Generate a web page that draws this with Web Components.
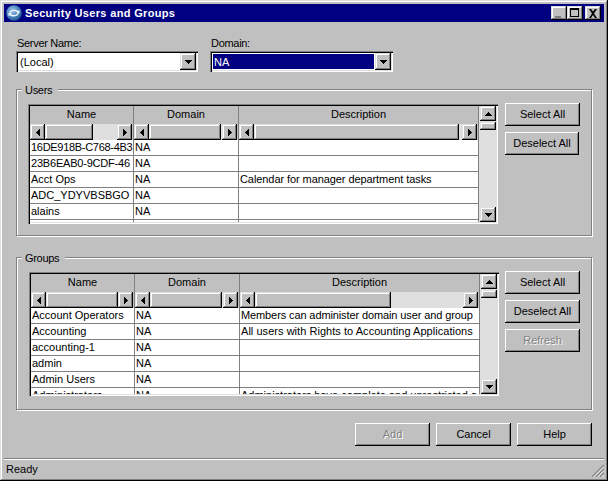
<!DOCTYPE html>
<html><head><meta charset="utf-8"><title>Security Users and Groups</title>
<style>
html,body{margin:0;padding:0;background:#c0c0c0;overflow:hidden}
body{font:11px "Liberation Sans",Arial,sans-serif;color:#000}
</style></head><body>
<x-window heading="Security Users and Groups">
  <x-form-row>
    <x-combo label="Server Name:" value="(Local)" style="width:182px"></x-combo>
    <x-combo label="Domain:" value="NA" selected style="width:183px"></x-combo>
  </x-form-row>
  <x-group legend="Users" style="height:147px;margin-top:17px;--pad-left:11px;--gap:7px">
    <x-grid cols="104 105 240" thumbs="48 72 205" style="--rows-h:82px">
      <x-row><x-cell style="letter-spacing:-.3px">16DE918B-C768-4B3</x-cell><x-cell>NA</x-cell><x-cell></x-cell></x-row>
      <x-row><x-cell style="letter-spacing:-.2px">23B6EAB0-9CDF-46</x-cell><x-cell>NA</x-cell><x-cell></x-cell></x-row>
      <x-row><x-cell>Acct Ops</x-cell><x-cell>NA</x-cell><x-cell style="letter-spacing:-.08px">Calendar for manager department tasks</x-cell></x-row>
      <x-row><x-cell>ADC_YDYVBSBGO</x-cell><x-cell>NA</x-cell><x-cell></x-cell></x-row>
      <x-row><x-cell>alains</x-cell><x-cell>NA</x-cell><x-cell></x-cell></x-row>
      <x-row><x-cell></x-cell><x-cell></x-cell><x-cell></x-cell></x-row>
    </x-grid>
    <x-button slot="actions">Select All</x-button>
    <x-button slot="actions" style="width:74px">Deselect All</x-button>
  </x-group>
  <x-group legend="Groups" style="height:153px;margin-top:21px;--pad-left:12px;--gap:6px">
    <x-grid cols="104 105 240" thumbs="72 72 136" style="--rows-h:86px">
      <x-row><x-cell>Account Operators</x-cell><x-cell>NA</x-cell><x-cell style="letter-spacing:-.11px">Members can administer domain user and group</x-cell></x-row>
      <x-row><x-cell>Accounting</x-cell><x-cell>NA</x-cell><x-cell style="letter-spacing:.04px">All users with Rights to Accounting Applications</x-cell></x-row>
      <x-row><x-cell>accounting-1</x-cell><x-cell>NA</x-cell><x-cell></x-cell></x-row>
      <x-row><x-cell>admin</x-cell><x-cell>NA</x-cell><x-cell></x-cell></x-row>
      <x-row><x-cell>Admin Users</x-cell><x-cell>NA</x-cell><x-cell></x-cell></x-row>
      <x-row><x-cell>Administrators</x-cell><x-cell>NA</x-cell><x-cell>Administrators have complete and unrestricted a</x-cell></x-row>
    </x-grid>
    <x-button slot="actions">Select All</x-button>
    <x-button slot="actions">Deselect All</x-button>
    <x-button slot="actions" disabled>Refresh</x-button>
  </x-group>
  <x-footer>
    <x-button disabled>Add</x-button>
    <x-button>Cancel</x-button>
    <x-button>Help</x-button>
  </x-footer>
  <x-status slot="status">Ready</x-status>
</x-window>
<script>
const FONT = '"Liberation Sans",Arial,sans-serif';
function def(name, css, html, init){
  customElements.define(name, class extends HTMLElement{
    constructor(){super();this.attachShadow({mode:'open'});}
    connectedCallback(){
      const h = typeof html==='function'?html(this):html;
      this.shadowRoot.innerHTML = '<style>'+css+'</style>'+h;
      if(init) init(this,this.shadowRoot);
    }
  });
}
const RAISED='box-shadow:inset -1px -1px #000,inset 1px 1px #dfdfdf,inset -2px -2px #808080,inset 2px 2px #fff;';
def('x-arrow',`:host{display:inline-block;line-height:0}svg{display:block}`,
  el=>{
    const p={up:[7,4,'M3 0h1v1h1v1h1v1h1v1H0V3h1V2h1V1h1z'],down:[7,4,'M0 0h7v1H6v1H5v1H4v1H3V3H2V2H1V1H0z'],left:[4,7,'M3 0h1v7H3V6H2V5H1V4H0V3h1V2h1V1h1z'],right:[4,7,'M0 0h1v1h1v1h1v1h1v1H3v1H2v1H1v1H0z']}[el.getAttribute('dir')];
    return `<svg width="${p[0]}" height="${p[1]}" viewBox="0 0 ${p[0]} ${p[1]}" shape-rendering="crispEdges"><path d="${p[2]}" fill="#000"/></svg>`;
  });
def('x-sbtn',`:host{display:flex;align-items:center;justify-content:center;flex:none;background:#c0c0c0;box-sizing:border-box;${RAISED}width:var(--w,15px);height:var(--h,16px)}`,
  el=>`<x-arrow dir="${el.getAttribute('dir')}"></x-arrow>`);
def('x-window',`
  :host{display:flex;flex-direction:column;box-sizing:border-box;width:608px;height:481px;padding:4px;background:#c0c0c0;font:11px ${FONT};
    box-shadow:inset -1px -1px #000,inset 1px 1px #dfdfdf,inset -2px -2px #808080,inset 2px 2px #fff}
  .title{display:flex;align-items:center;height:18px;flex:none;background:#000080;color:#fff;font-weight:700;padding:0 3px 0 2px}
  .title span{margin-left:3px;letter-spacing:.34px;white-space:nowrap;flex:1}
  .ctl{display:flex;align-items:center}
  .tb{box-sizing:border-box;width:16px;height:14px;background:#c0c0c0;${RAISED}display:flex;align-items:center;justify-content:center}
  .tb svg{display:block}
  .body{flex:1;display:flex;flex-direction:column;padding:14px 12px 0;min-height:0}
  `,el=>`
  <div class="title">
    <svg width="16" height="16" viewBox="0 0 16 16"><defs><radialGradient id="g" cx=".4" cy=".35" r=".75"><stop offset="0" stop-color="#9fc4e8"/><stop offset=".6" stop-color="#3f7cb8"/><stop offset="1" stop-color="#174a80"/></radialGradient></defs><circle cx="8" cy="8" r="7.8" fill="url(#g)"/><path d="M3 7.500C4.500 4.500 9.500 3.800 12.500 6l1-1.200v3.400h-3.400l1.200-1.100C9.500 5.600 6 5.700 4.500 7.800zM13 8.700c-1.500 3-6.500 3.700-9.500 1.500l-1 1.200V8h3.400L4.700 9.100c1.800 1.500 5.300 1.400 6.800-.7z" fill="#eef5fb"/></svg>
    <span>${el.getAttribute('heading')}</span>
    <div class="ctl">
      <div class="tb"><svg width="10" height="10" viewBox="0 0 10 10"><rect x="1" y="8" width="6" height="2" fill="#808080"/></svg></div>
      <div class="tb"><svg width="10" height="10" viewBox="0 0 10 10"><path d="M0 0h9v9H0zM1 2v6h7V2z" fill="#000" fill-rule="evenodd"/></svg></div>
      <div class="tb" style="margin-left:2px"><svg width="10" height="9" viewBox="0 0 10 9"><path d="M1 0h2l2 2.500L7 0h2L6 4.500 9 9H7L5 6 3 9H1l3-4.500z" fill="#000"/></svg></div>
    </div>
  </div>
  <div class="body"><slot></slot></div>
  <slot name="status"></slot>`);
def('x-form-row',`:host{display:flex;gap:12px;flex:none}`,`<slot></slot>`);
def('x-combo',`
  :host{display:flex;flex-direction:column;flex:none}
  label{height:15px;line-height:14px;white-space:nowrap;padding-left:1px;letter-spacing:-.3px}
  .box{box-sizing:border-box;height:21px;padding:2px;display:flex;background:#fff;
    box-shadow:inset 1px 1px #808080,inset 2px 2px #000,inset -1px -1px #fff,inset -2px -2px #dfdfdf}
  .val{flex:1;box-sizing:border-box;margin:1px;height:15px;display:flex;align-items:center;padding:0 0 0 1px}
  .sel{background:#000080;color:#fff}
  x-sbtn{--w:16px;--h:17px}
  `,el=>`<label>${el.getAttribute('label')}</label>
  <div class="box"><div class="val ${el.hasAttribute('selected')?'sel':''}">${el.getAttribute('value')}</div><x-sbtn dir="down"></x-sbtn></div>`);
def('x-group',`
  :host{display:flex;flex:none;position:relative;box-sizing:border-box;width:576px;border:1px solid #808080;box-shadow:inset 1px 1px #fff,1px 1px #fff;padding:14px 0 0 var(--pad-left,11px);gap:var(--gap,7px);align-items:flex-start}
  .lg{position:absolute;left:5px;top:-7px;background:#c0c0c0;padding:0 6px 0 3px;height:14px;line-height:15px;letter-spacing:-.3px}
  .act{display:flex;flex-direction:column;gap:6px;margin-top:-1px}
  `,el=>`<span class="lg">${el.getAttribute('legend')}</span><slot></slot><div class="act"><slot name="actions"></slot></div>`);
def('x-grid',`
  :host{display:grid;grid-template-columns:449px 17px;box-sizing:border-box;width:470px;padding:2px;background:#c0c0c0;flex:none;
    box-shadow:inset 1px 1px #808080,inset 2px 2px #000,inset -1px -1px #fff,inset -2px -2px #dfdfdf}
  .hd,.sc{display:grid;grid-template-columns:var(--cols)}
  .hd div{height:18px;line-height:17px;text-align:center;border-right:1px solid #808080;box-sizing:border-box}
  .sc>div{display:flex;height:16px;border-right:1px solid #808080;box-sizing:border-box;padding-right:1px}
  .thumb{flex:none;box-sizing:border-box;height:16px;background:#c0c0c0;${RAISED}}
  .trk{flex:1;background:#dfdfdf}
  .rows{height:var(--rows-h);overflow:hidden}
  .v{display:flex;flex-direction:column;background:#dfdfdf;height:100%;padding-left:1px;box-sizing:border-box}
  .v x-sbtn{--w:16px;--h:15px}
  .vt{box-sizing:border-box;width:16px;height:8px;margin-top:1px;background:#c0c0c0;${RAISED}}
  .sp{flex:1}
  `,el=>{
    const cols=el.getAttribute('cols').split(' ');
    const th=el.getAttribute('thumbs').split(' ');
    el.style.setProperty('--cols',cols.map(c=>c+'px').join(' '));
    const names=['Name','Domain','Description'];
    return `<div class="l">
      <div class="hd">${names.map(n=>`<div>${n}</div>`).join('')}</div>
      <div class="sc">${th.map(t=>`<div><x-sbtn dir="left"></x-sbtn><div class="thumb" style="width:${t}px"></div><div class="trk"></div><x-sbtn dir="right"></x-sbtn></div>`).join('')}</div>
      <div class="rows"><slot></slot></div>
    </div>
    <div class="v"><x-sbtn dir="up"></x-sbtn><div class="vt"></div><div class="sp"></div><x-sbtn dir="down"></x-sbtn></div>`;
  });
def('x-row',`:host{display:grid;grid-template-columns:var(--cols);height:16px;box-sizing:border-box;background:#fff;border-bottom:1px solid #808080}`,`<slot></slot>`);
def('x-cell',`:host{display:block;overflow:hidden;white-space:nowrap;box-sizing:border-box;border-right:1px solid #808080;height:15px;line-height:15px;padding-left:1px}`,`<slot></slot>`);
def('x-button',`
  :host{display:flex;align-items:center;justify-content:center;flex:none;box-sizing:border-box;width:75px;height:23px;padding-bottom:2px;background:#c0c0c0;
    box-shadow:inset -1px -1px #000,inset 1px 1px #fff,inset -2px -2px #808080;white-space:nowrap}
  :host([disabled]){color:#808080;text-shadow:1px 1px 0 #fff}
  `,`<slot></slot>`);
def('x-footer',`:host{display:flex;justify-content:flex-end;gap:6px;margin-top:13px;flex:none}`,`<slot></slot>`);
def('x-status',`
  :host{display:flex;align-items:center;justify-content:space-between;height:18px;flex:none;border-top:1px solid #808080;box-shadow:inset 0 1px #fff;padding:0 0 0 2px}
  span{padding-top:2px}
  svg{display:block;align-self:flex-end}
  `,`<span><slot></slot></span><svg width="14" height="14" viewBox="0 0 14 14"><path d="M2 14L14 2M6 14L14 6M10 14L14 10" stroke="#808080" stroke-width="1.400"/><path d="M3.500 14L14 3.500M7.500 14L14 7.500M11.500 14L14 11.500" stroke="#fff" stroke-width=".8"/></svg>`);
</script>
</body></html>
